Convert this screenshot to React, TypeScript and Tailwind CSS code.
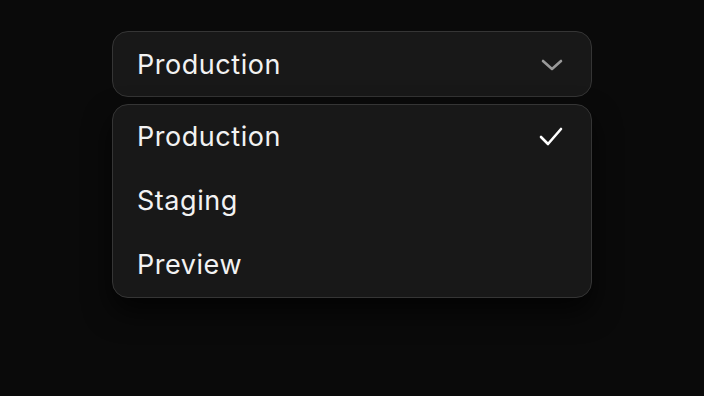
export default function App() {
  const items = ["Production", "Staging", "Preview"];
  return (
    <div
      className="w-[704px] h-[396px] bg-[#0a0a0a] flex flex-col items-center pt-[31px]"
      style={{ fontFamily: "Inter, 'Noto Sans', sans-serif" }}
    >
      <div className="w-[480px] h-[66px] rounded-[16px] border border-[#353535] bg-[#181818] flex items-center justify-between pl-[24px] pr-[28px] pt-[2px]">
        <span className="text-[27px] text-[#f2f2f2] tracking-[0.02em]">Production</span>
        <svg width="22" height="14" viewBox="0 0 22 14" fill="none">
          <path d="M2 3 L11 11 L20 3" stroke="#999999" strokeWidth="2.6" strokeLinecap="round" strokeLinejoin="round" />
        </svg>
      </div>
      <div className="mt-[7px] w-[480px] rounded-[16px] border border-[#353535] bg-[#181818] shadow-[0_14px_28px_rgba(0,0,0,0.7)] flex flex-col">
        {items.map((item, i) => (
          <div key={item} className="h-[64px] flex items-center justify-between pl-[24px] pr-[28px]">
            <span className="text-[27px] text-[#f2f2f2] tracking-[0.02em]">{item}</span>
            {i === 0 && (
              <svg width="24" height="20" viewBox="0 0 24 20" fill="none">
                <path d="M2 10 L9 17 L22 2" stroke="#ffffff" strokeWidth="2.6" strokeLinecap="round" strokeLinejoin="round" />
              </svg>
            )}
          </div>
        ))}
      </div>
    </div>
  );
}
